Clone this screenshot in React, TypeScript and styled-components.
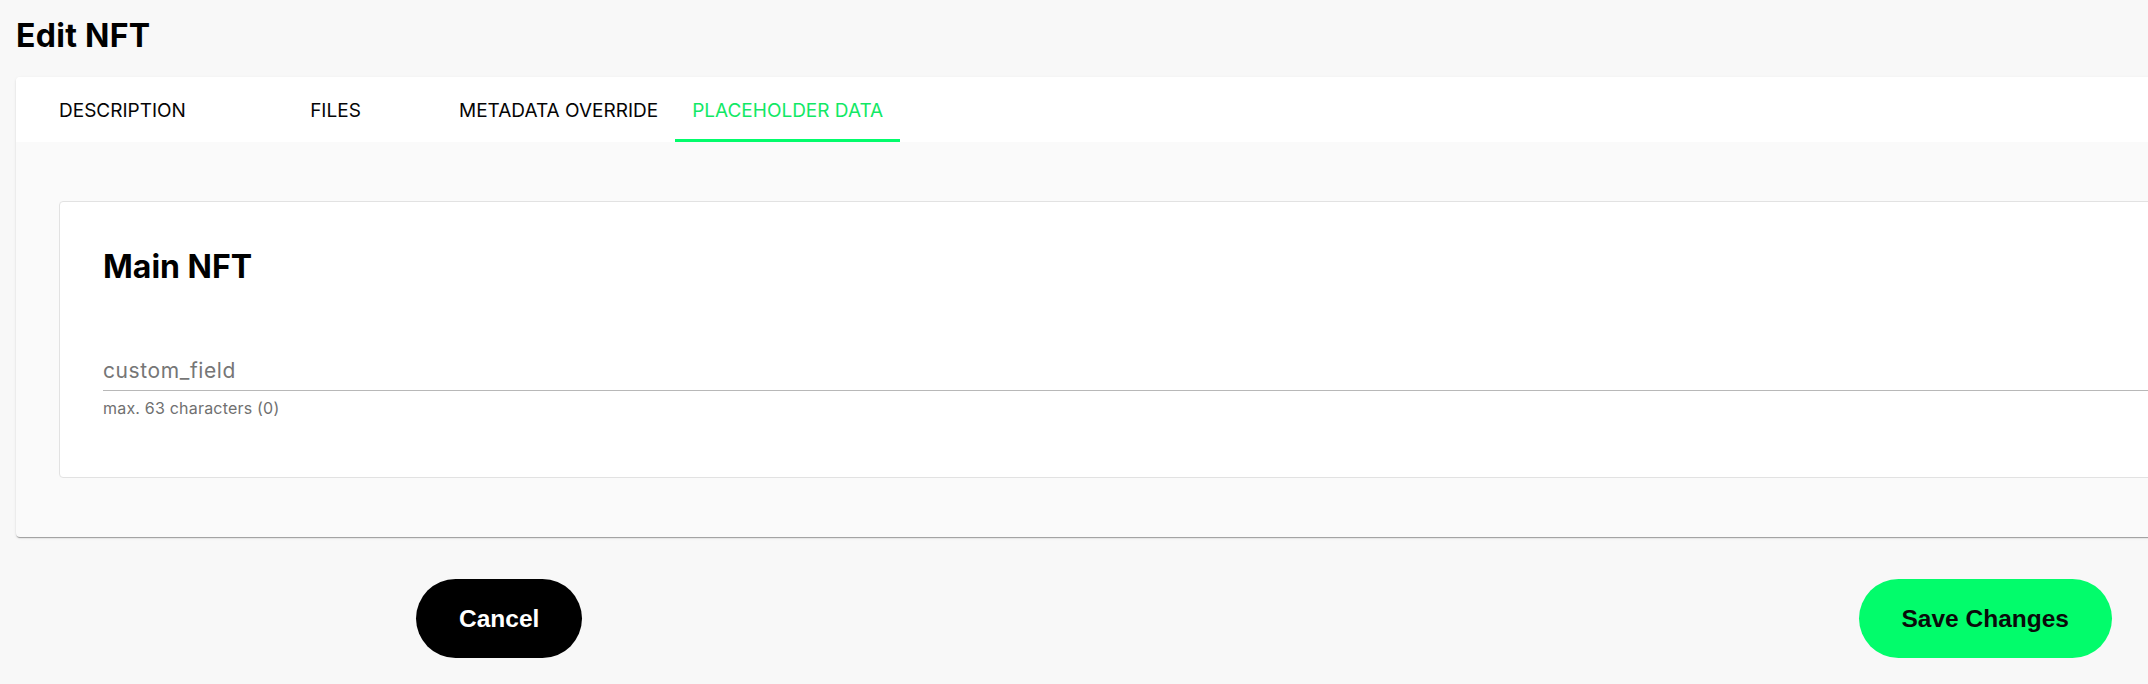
import React from "react";
import styled, { createGlobalStyle } from "styled-components";

const GlobalStyle = createGlobalStyle`
  html, body {
    margin: 0;
    padding: 0;
    background: #f8f8f8;
    overflow: hidden;
  }
  body {
    font-family: Inter, "Noto Sans", Arial, sans-serif;
    color: #000;
  }
  * { box-sizing: border-box; }
`;

const GREEN = "#02fc6b";

const Page = styled.div`
  padding: 16px 0 0 16px;
  width: 2148px;
`;

const Title = styled.h1`
  margin: 0 0 21px;
  font-size: 32px;
  line-height: 40px;
  font-weight: 700;
  letter-spacing: 0.3px;
`;

const Card = styled.section`
  margin-right: -60px;
  background: #fafafa;
  border-radius: 4px;
  box-shadow: 0 2px 1px -1px rgba(0, 0, 0, 0.22), 0 1px 1px 0 rgba(0, 0, 0, 0.14),
    0 1px 3px 0 rgba(0, 0, 0, 0.1);
  overflow: hidden;
`;

const TabBar = styled.nav`
  display: flex;
  height: 65px;
  background: #fff;
`;

const Tab = styled.button<{ $active?: boolean }>`
  display: flex;
  align-items: center;
  justify-content: center;
  min-width: 213px;
  padding: 5px 17px 0;
  border: none;
  border-bottom: 3px solid ${(p) => (p.$active ? GREEN : "transparent")};
  background: transparent;
  font-family: Inter, "Noto Sans", Arial, sans-serif;
  font-size: 19px;
  font-weight: 400;
  color: ${(p) => (p.$active ? "#12e865" : "#050505")};
  text-transform: uppercase;
  cursor: pointer;
`;

const CardBody = styled.div`
  padding: 59px 0 59px 43px;
`;

const InnerCard = styled.div`
  background: #fff;
  border: 1px solid #e2e2e2;
  border-radius: 4px;
  padding: 45px 0 59px 43px;
`;

const SectionTitle = styled.h2`
  margin: 0;
  font-size: 32px;
  line-height: 40px;
  font-weight: 700;
`;

const Field = styled.div`
  margin-top: 72px;
  display: flex;
  flex-direction: column;
`;

const Input = styled.input`
  box-sizing: content-box;
  width: 100%;
  height: 24px;
  padding: 0 0 7px;
  margin: 0;
  border: none;
  border-bottom: 1px solid #b8b8b8;
  background: transparent;
  font-family: Inter, "Noto Sans", Arial, sans-serif;
  font-size: 21px;
  line-height: 24px;
  letter-spacing: 0.6px;
  color: #222;
  outline: none;
  &::placeholder {
    color: #767676;
  }
`;

const Helper = styled.span`
  margin-top: 7px;
  font-size: 16px;
  line-height: 20px;
  letter-spacing: 0.2px;
  color: #707070;
`;

const Footer = styled.div`
  display: flex;
  justify-content: space-between;
  align-items: center;
  margin-top: 42px;
  padding: 0 36px 0 400px;
`;

const PillButton = styled.button<{ $primary?: boolean }>`
  height: 79px;
  padding: 0 43px;
  border: none;
  border-radius: 40px;
  background: ${(p) => (p.$primary ? GREEN : "#000")};
  color: ${(p) => (p.$primary ? "#0a0a0a" : "#fff")};
  font-family: "Liberation Sans", Arial, sans-serif;
  font-size: 24.5px;
  font-weight: 700;
  cursor: pointer;
`;

const tabs = ["Description", "Files", "Metadata Override", "Placeholder Data"];

export default function App() {
  return (
    <>
      <GlobalStyle />
      <Page>
        <Title>Edit NFT</Title>
        <Card>
          <TabBar>
            {tabs.map((t, i) => (
              <Tab key={t} $active={i === 3}>
                {t}
              </Tab>
            ))}
          </TabBar>
          <CardBody>
            <InnerCard>
              <SectionTitle>Main NFT</SectionTitle>
              <Field>
                <Input placeholder="custom_field" />
                <Helper>max. 63 characters (0)</Helper>
              </Field>
            </InnerCard>
          </CardBody>
        </Card>
        <Footer>
          <PillButton>Cancel</PillButton>
          <PillButton $primary>Save Changes</PillButton>
        </Footer>
      </Page>
    </>
  );
}
